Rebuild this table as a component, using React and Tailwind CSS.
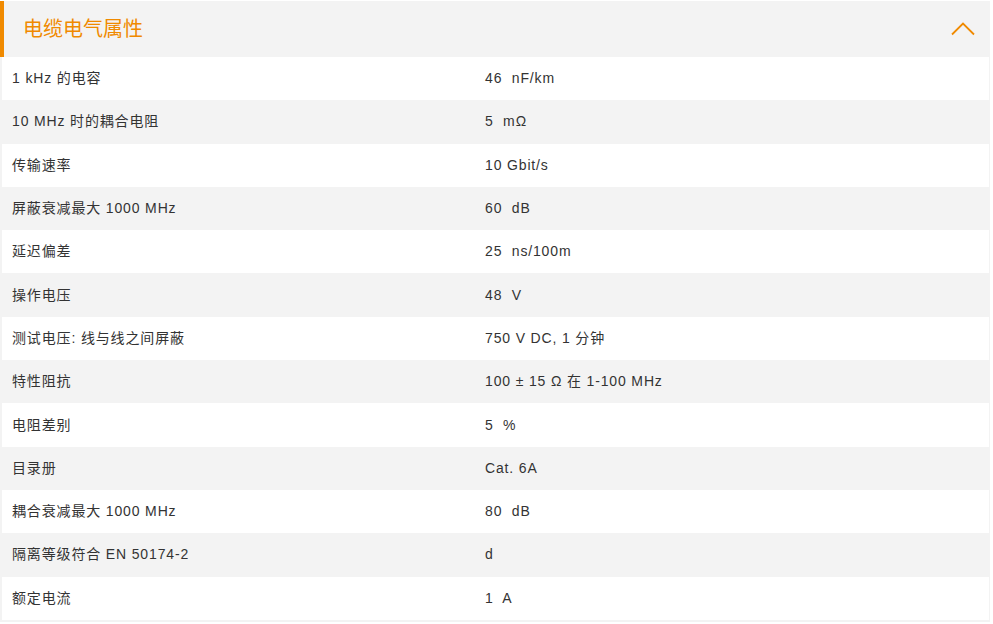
const rows = [
  ["1 kHz 的电容", "46  nF/km"],
  ["10 MHz 时的耦合电阻", "5  mΩ"],
  ["传输速率", "10 Gbit/s"],
  ["屏蔽衰减最大 1000 MHz", "60  dB"],
  ["延迟偏差", "25  ns/100m"],
  ["操作电压", "48  V"],
  ["测试电压: 线与线之间屏蔽", "750 V DC, 1 分钟"],
  ["特性阻抗", "100 ± 15 Ω 在 1-100 MHz"],
  ["电阻差别", "5  %"],
  ["目录册", "Cat. 6A"],
  ["耦合衰减最大 1000 MHz", "80  dB"],
  ["隔离等级符合 EN 50174-2", "d"],
  ["额定电流", "1  A"],
];

export default function App() {
  return (
    <div
      className="w-[990px] mt-px bg-[#f3f3f3] pb-[2px] text-[#333]"
      style={{ fontFamily: '"Liberation Sans", "Noto Sans CJK SC", sans-serif' }}
    >
      <div className="h-[56px] flex items-center justify-between border-l-4 border-[#f08a00] pl-[19px] pr-[14px]">
        <span className="text-[20px] text-[#f08a00]">电缆电气属性</span>
        <svg width="26" height="16" viewBox="0 0 26 16" fill="none">
          <path d="M2 13.5 L13 2.5 L24 13.5" stroke="#f08a00" strokeWidth="1.8" />
        </svg>
      </div>
      <div className="pl-[2px] pr-px">
        {rows.map(([label, value], i) => (
          <div
            key={label}
            className={`h-[43.3px] flex items-center text-[14px] tracking-[0.85px] ${
              i % 2 === 0 ? "bg-white" : "bg-[#f3f3f3]"
            }`}
          >
            <span className="w-[483px] pl-[10px] whitespace-pre">{label}</span>
            <span className="whitespace-pre">{value}</span>
          </div>
        ))}
      </div>
    </div>
  );
}
